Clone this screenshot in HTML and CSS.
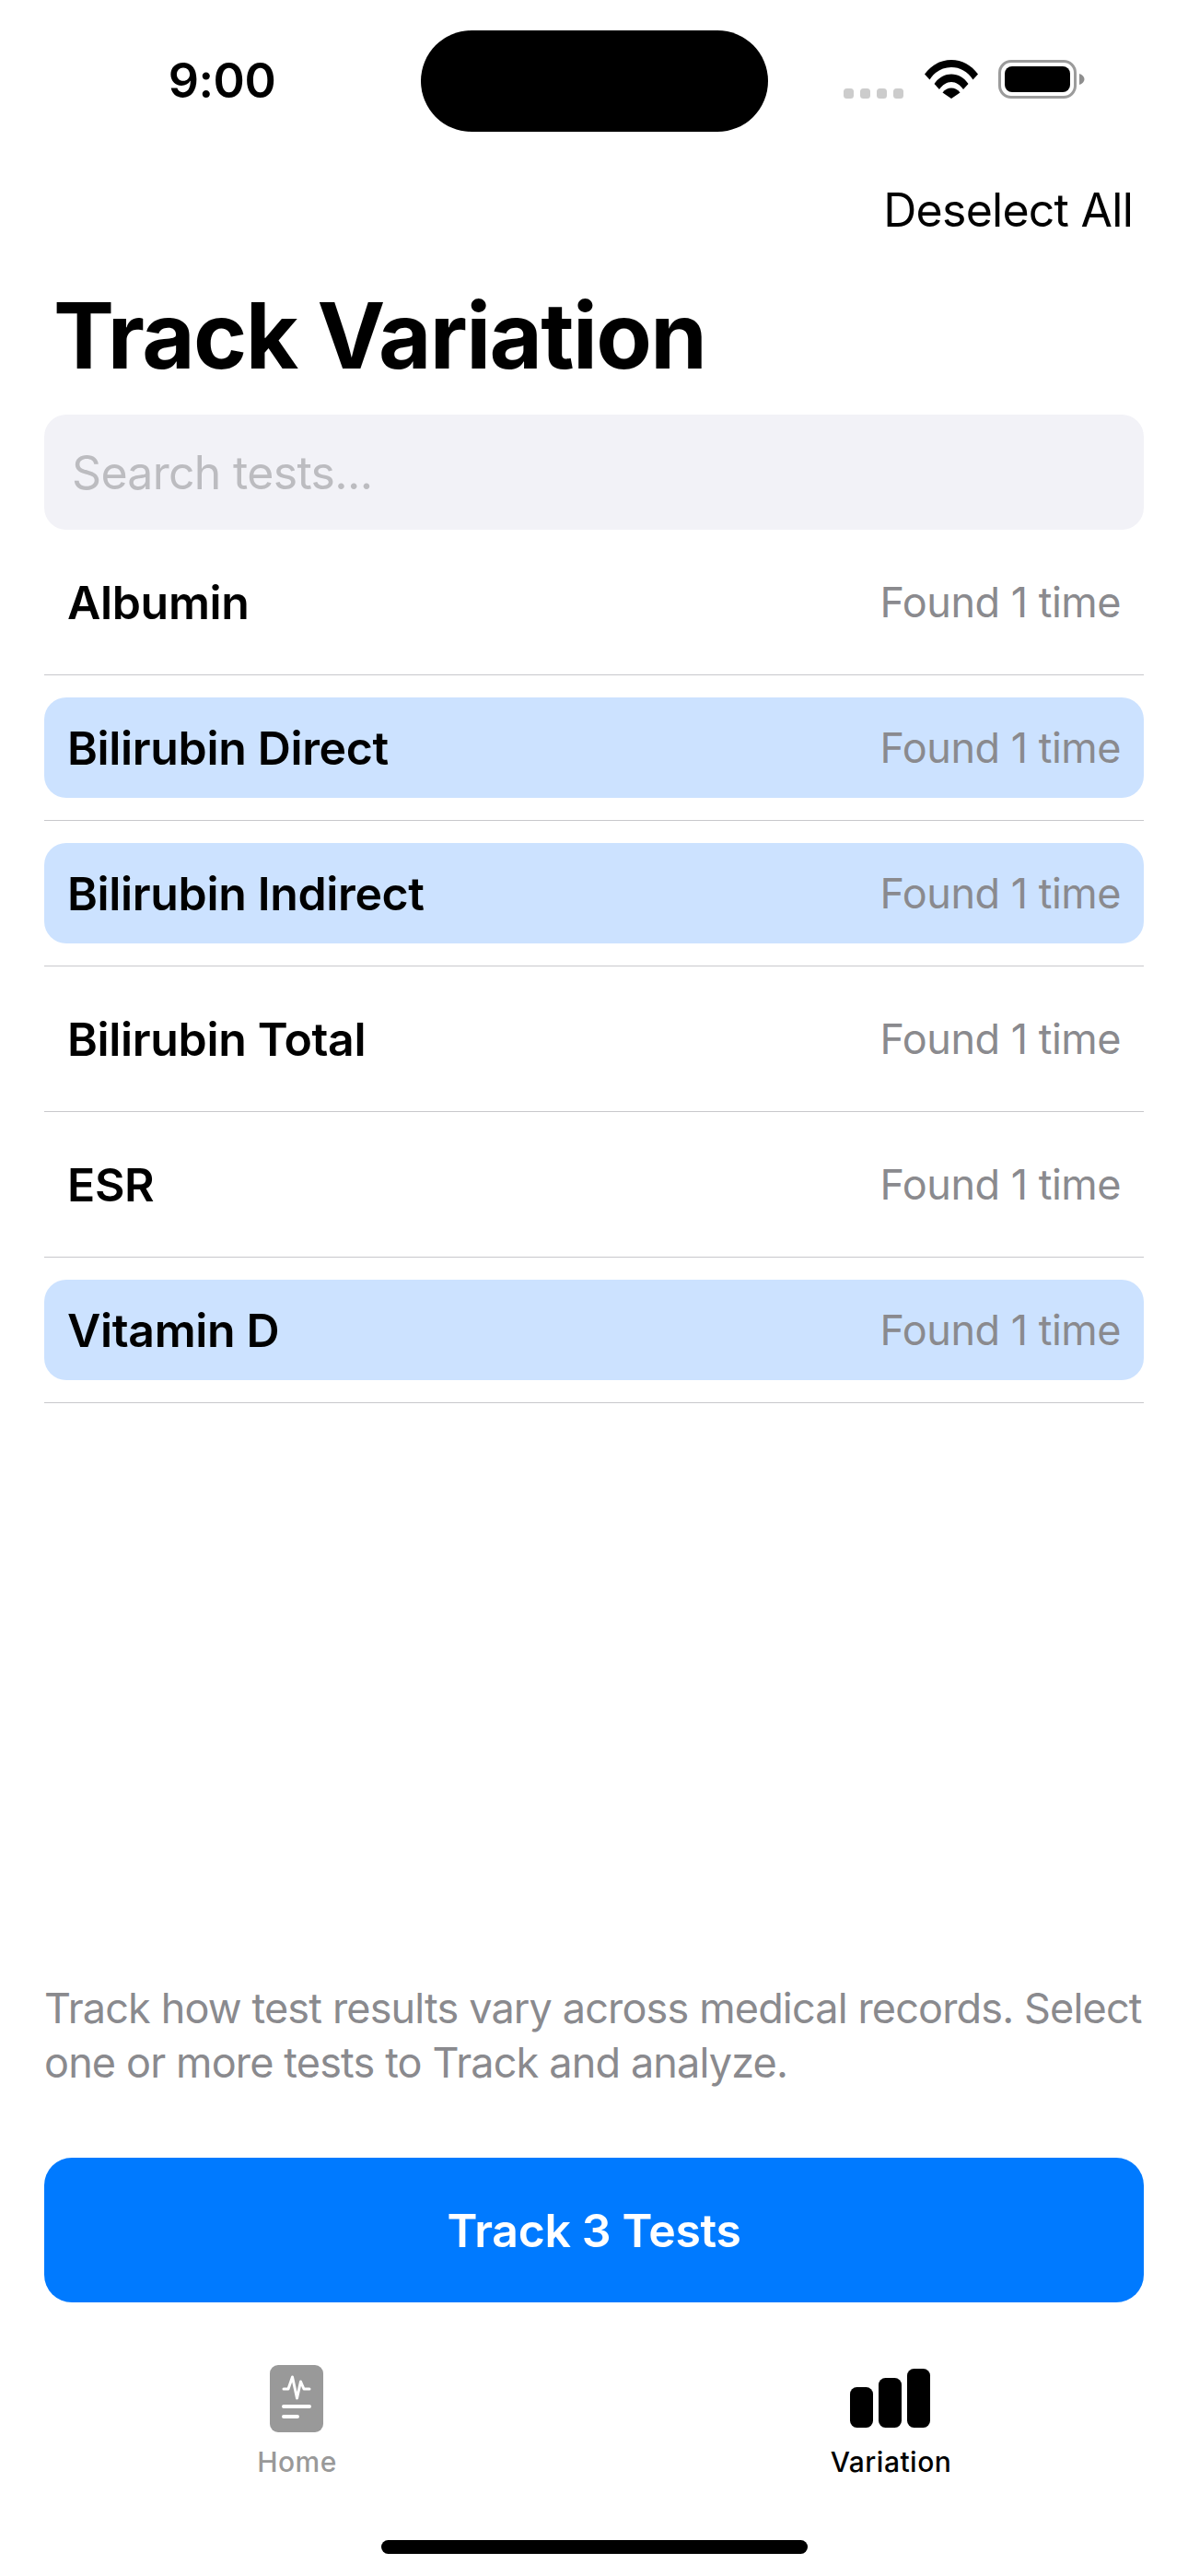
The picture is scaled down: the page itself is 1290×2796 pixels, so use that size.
FILE: index.html
```html
<!DOCTYPE html>
<html lang="en">
<head>
<meta charset="utf-8">
<title>Track Variation</title>
<link rel="stylesheet" href="styles.css">
</head>
<body>
<div class="screen">
  <header class="status">
    <span class="clock">9:00</span>
    <div class="island"></div>
    <div class="status-icons">
      <div class="signal"><i></i><i></i><i></i><i></i></div>
      <svg class="wifi" width="58" height="42" viewBox="0 0 58 42"><path d="M0 15.500C7.500 5.500 17.500 0 29 0s21.500 5.500 29 15.500l-5.500 6C46.500 12.500 38.500 8 29 8S11.500 12.500 5.500 21.500z"/><path d="M10.500 26C15 19.500 21.500 15.500 29 15.500S43 19.500 47.500 26L42 32C38.500 27 34 24 29 24s-9.500 3-13 8z"/><path d="M19.500 35.500C22 32 25.500 30.500 29 30.500s7 1.500 9.500 5L29 42z"/></svg>
      <svg class="battery" width="94" height="42" viewBox="0 0 94 42"><rect x="1.500" y="1.500" width="82" height="39" rx="12.500" fill="none" stroke="#9b9b9b" stroke-width="3"/><rect x="7" y="7" width="71" height="28" rx="8"/><path d="M88 15c3.500 1 5.500 3.500 5.500 6s-2 5-5.500 6z" fill="#8e8e8e"/></svg>
    </div>
  </header>

  <nav class="topbar"><span class="deselect">Deselect All</span></nav>
  <h1 class="title">Track Variation</h1>

  <main class="content">
    <div class="search">Search tests...</div>
    <ul class="list">
      <li class="row"><div class="pill"><span class="name">Albumin</span><span class="count">Found 1 time</span></div></li>
      <li class="row"><div class="pill selected"><span class="name">Bilirubin Direct</span><span class="count">Found 1 time</span></div></li>
      <li class="row"><div class="pill selected"><span class="name">Bilirubin Indirect</span><span class="count">Found 1 time</span></div></li>
      <li class="row"><div class="pill"><span class="name">Bilirubin Total</span><span class="count">Found 1 time</span></div></li>
      <li class="row"><div class="pill"><span class="name">ESR</span><span class="count">Found 1 time</span></div></li>
      <li class="row"><div class="pill selected"><span class="name">Vitamin D</span><span class="count">Found 1 time</span></div></li>
    </ul>
    <div class="spacer"></div>
    <p class="hint">Track how test results vary across medical records. Select one or more tests to Track and analyze.</p>
    <button class="cta">Track 3 Tests</button>
  </main>

  <footer class="tabs">
    <div class="tab">
      <svg class="tab-icon" width="58" height="73" viewBox="0 0 58 73"><rect width="58" height="73" rx="9" fill="#999"/><path d="M15 26h5l4.500-13 5 23 4-18 3.500 8h6" fill="none" stroke="#fff" stroke-width="3" stroke-linecap="round" stroke-linejoin="round"/><path d="M15 45h28M15 56h15" stroke="#fff" stroke-width="4" stroke-linecap="round"/></svg>
      <span class="tab-label">Home</span>
    </div>
    <div class="tab active">
      <svg class="tab-icon" width="88" height="73" viewBox="0 0 88 73"><rect x="0" y="24" width="25" height="44" rx="7.500"/><rect x="31" y="14" width="25" height="54" rx="7.500"/><rect x="62" y="4" width="25" height="64" rx="7.500"/></svg>
      <span class="tab-label">Variation</span>
    </div>
  </footer>
  <div class="home-bar"><div class="home-indicator"></div></div>
</div>
</body>
</html>
```
FILE: styles.css
```css
* { box-sizing: border-box; }
html, body { margin: 0; padding: 0; background: #fff; }
body { font-family: Inter, "Liberation Sans", sans-serif; color: #000; }
.screen { width: 1290px; height: 2796px; display: flex; flex-direction: column; overflow: hidden; }

.status { height: 199px; flex: none; padding-top: 33px; display: flex; align-items: flex-start; }
.clock { width: 457px; padding-left: 25px; padding-top: 21px; text-align: center; font-size: 52px; line-height: 68px; font-weight: 600; letter-spacing: -.5px; }
.island { width: 377px; height: 110px; border-radius: 55px; background: #000; flex: none; }
.status-icons { margin-left: 82px; padding-top: 32px; display: flex; align-items: flex-end; }
.signal { display: flex; gap: 7px; margin-right: 23px; }
.signal i { width: 11px; height: 11px; border-radius: 3.500px; background: #ccc; display: block; }
.wifi { margin-right: 22px; display: block; }
.battery { display: block; }

.topbar { flex: none; height: 120px; padding-right: 60px; padding-top: 1px; display: flex; justify-content: flex-end; align-items: flex-start; }
.deselect { font-size: 50px; line-height: 56px; letter-spacing: -.75px; }
.title { flex: none; margin: 0; height: 131px; padding: 0 0 0 58px; font-size: 99px; line-height: 90px; font-weight: 700; letter-spacing: -1.6px; }

.content { flex: 1; display: flex; flex-direction: column; padding: 0 48px; min-height: 0; }
.search { height: 125px; flex: none; border-radius: 24px; background: #f2f2f7; padding-left: 30px; display: flex; align-items: center; font-size: 50px; letter-spacing: -.7px; color: #bcbcc0; }
.list { list-style: none; margin: 0; padding: 0; }
.row { padding: 24px 0; border-bottom: 1px solid #c8c8cc; height: 158px; }
.pill { height: 109px; border-radius: 24px; padding: 0 25px; display: flex; align-items: center; justify-content: space-between; }
.pill.selected { background: #cce2ff; }
.name { font-size: 50px; font-weight: 600; letter-spacing: -.35px; }
.count { font-size: 45px; letter-spacing: -.5px; color: #8a8a8e; }
.spacer { flex: 1; }
.hint { margin: 0; font-size: 45px; line-height: 59px; letter-spacing: -.85px; color: #8a8a8e; }
.cta { margin-top: 74px; height: 157px; flex: none; border: 0; border-radius: 30px; background: #007aff; color: #fff; font: 600 50px Inter, "Liberation Sans", sans-serif; letter-spacing: -.35px; }

.tabs { flex: none; margin-top: 68px; display: grid; grid-template-columns: 1fr 1fr; }
.tab { display: flex; flex-direction: column; align-items: center; color: #999; }
.tab.active { color: #000; }
.tab-icon { display: block; margin-right: 2px; }
.tab-label { margin-top: 14px; font-size: 30px; line-height: 36px; letter-spacing: .5px; font-weight: 500; }
.home-bar { flex: none; height: 106px; display: flex; justify-content: center; align-items: flex-start; padding-top: 67px; }
.home-indicator { width: 463px; height: 15px; border-radius: 8px; background: #000; }
```
